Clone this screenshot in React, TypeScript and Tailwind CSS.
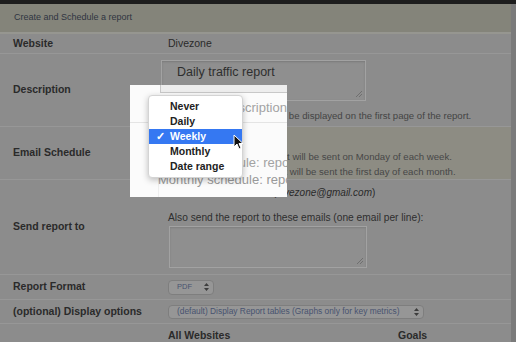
import React from "react";

function Grip() {
  return (
    <svg width="8" height="8" viewBox="0 0 8 8" className="absolute right-[2px] bottom-[2px]">
      <path d="M7 1 L1 7 M7 4 L4 7" stroke="#6f6f6f" strokeWidth="1" />
    </svg>
  );
}

function Arrows() {
  return (
    <svg width="5" height="8" viewBox="0 0 5 8">
      <path d="M2.5 0 L5 3 L0 3 Z M2.5 8 L5 5 L0 5 Z" fill="#3d3d3d" />
    </svg>
  );
}

function Cursor() {
  return (
    <svg width="11" height="16" viewBox="0 0 11 16" className="absolute left-[233px] top-[134px]">
      <path d="M1 1 L1 13 L4 10 L6 15 L8 14 L6 9.5 L10 9.5 Z" fill="#111" stroke="#fff" strokeWidth="1" strokeLinejoin="round" />
    </svg>
  );
}

const items = ["Never", "Daily", "Weekly", "Monthly", "Date range"];

export default function App() {
  return (
    <div className="relative w-[516px] h-[342px] overflow-hidden bg-[#7b7b7b] font-['Liberation_Sans',Arial,sans-serif] text-[#2a2a2a]">
      <div className="h-[4px] bg-[#1d1d1d]" />
      <div className="w-[511px] bg-[#8c8c8c] h-[338px]">
        {/* header */}
        <div className="h-[28px] bg-[#84847a] flex items-center pl-[14px] text-[9px] text-[#2f3441]">
          Create and Schedule a report
        </div>
        <div className="h-[2px] bg-[#969690]" />

        {/* Website */}
        <div className="grid grid-cols-[160px_1fr] h-[20px] border-b border-[#979797]">
          <div className="flex items-center pl-[13px] text-[10.5px] font-bold">Website</div>
          <div className="flex items-center pl-[8px] text-[10.5px]">Divezone</div>
        </div>

        {/* Description */}
        <div className="grid grid-cols-[160px_1fr] h-[73px] border-b border-[#979797]">
          <div className="flex items-center pl-[13px] text-[10.5px] font-bold">Description</div>
          <div className="pt-[6px]">
            <div className="relative ml-[1px] w-[205px] h-[41px] border border-[#a2a2a2] bg-[#8f8f8f] shadow-[inset_0_1px_2px_rgba(0,0,0,0.15)] pl-[15px] pt-[2px] text-[12.5px] text-[#2e2e2e]">
              Daily traffic report
              <Grip />
            </div>
            <div className="mt-[9px] pl-[43px] text-[9.6px] leading-[12px] text-[#444]">
              This description will be displayed on the first page of the report.
            </div>
          </div>
        </div>

        {/* Email Schedule */}
        <div className="grid grid-cols-[160px_1fr] h-[53px] border-b border-[#979797]">
          <div className="flex items-center pl-[13px] text-[10.5px] font-bold">Email Schedule</div>
          <div className="bg-[#8d8c83] pt-[22px] pl-[22px] text-[9.6px] leading-[15px] text-[#474747]">
            <div className="pl-[5px]">Weekly schedule: report will be sent on Monday of each week.</div>
            <div>Monthly schedule: report will be sent the first day of each month.</div>
          </div>
        </div>

        {/* Send report to */}
        <div className="grid grid-cols-[160px_1fr] h-[95px] border-b border-[#979797]">
          <div className="flex items-center pl-[13px] text-[10.5px] font-bold">Send report to</div>
          <div className="pt-[6px] pl-[8px]">
            <div className="flex items-center h-[12px] pl-[37px] text-[10px]">
              <span className="w-[10px] h-[10px] border border-[#777] rounded-[2px] mr-[4px]" />
              Send to me (<span className="italic">divezone@gmail.com</span>)
            </div>
            <div className="mt-[14px] h-[12px] leading-[12px] text-[10.2px] text-[#2e2e2e]">
              Also send the report to these emails (one email per line):
            </div>
            <div className="relative mt-[2px] ml-[1px] w-[198px] h-[42px] border border-[#a2a2a2] bg-[#8f8f8f] shadow-[inset_0_1px_2px_rgba(0,0,0,0.12)]">
              <Grip />
            </div>
          </div>
        </div>

        {/* Report Format */}
        <div className="grid grid-cols-[160px_1fr] h-[25px] border-b border-[#979797]">
          <div className="flex items-center pl-[13px] text-[10.5px] font-bold">Report Format</div>
          <div className="flex items-center pl-[8px]">
            <div className="flex items-center justify-between w-[46px] h-[15px] rounded-[4px] border border-[#7e7e7e] bg-[#969696] pl-[8px] pr-[4px] text-[7.5px] text-[#485370]">
              PDF
              <Arrows />
            </div>
          </div>
        </div>

        {/* Display options */}
        <div className="grid grid-cols-[160px_1fr] h-[24px] border-b border-[#979797]">
          <div className="flex items-center pl-[13px] text-[10.5px] font-bold">(optional) Display options</div>
          <div className="flex items-center pl-[8px]">
            <div className="flex items-center justify-between w-[256px] h-[14px] rounded-[4px] border border-[#7e7e7e] bg-[#969696] pl-[8px] pr-[4px] text-[8.4px] text-[#485370]">
              (default) Display Report tables (Graphs only for key metrics)
              <Arrows />
            </div>
          </div>
        </div>

        {/* All Websites */}
        <div className="grid grid-cols-[160px_1fr]">
          <div />
          <div className="grid grid-cols-[230px_auto] pl-[8px] pt-[5px] text-[10.5px] font-bold leading-[12px]">
            <span>All Websites</span>
            <span>Goals</span>
          </div>
        </div>
      </div>

      {/* spotlight (magnified area) */}
      <div className="absolute left-[130px] top-[85px] w-[157px] h-[112px] bg-[#fbfbfb] overflow-hidden z-10">
        <div className="absolute left-[30px] top-0 w-[130px] h-[8px] bg-[#ededed] border-l border-b border-[#c8c8c8]" />
        <div className="absolute left-0 top-[37px] w-full h-px bg-[#e4e4e4]" />
        <div className="absolute left-[28px] top-[37px] bottom-0 w-px bg-[#eeeeee]" />
        <div className="absolute left-[94px] top-[15px] whitespace-nowrap text-[13px] leading-[16px] text-[#a3a3a3]">
          description
        </div>
        <div className="absolute left-[28px] top-[70px] whitespace-nowrap text-[13px] leading-[16px] text-[#a3a3a3]">
          Weekly schedule: report
        </div>
        <div className="absolute left-[28px] top-[87px] whitespace-nowrap text-[13px] leading-[16px] text-[#999]">
          Monthly schedule: report
        </div>
      </div>

      {/* dropdown menu */}
      <div className="absolute z-20 left-[148px] top-[95px] w-[95px] h-[83px] bg-white rounded-[4px] border border-[#d4d4d4] shadow-[0_2px_6px_rgba(0,0,0,0.25)] pt-[3px]">
        {items.map((it) =>
          it === "Weekly" ? (
            <div key={it} className="relative flex items-center h-[15px] pl-[21px] bg-[#3578f2] text-white text-[10.5px] font-bold">
              <span className="absolute left-[7px] text-[11px]">✓</span>
              {it}
            </div>
          ) : (
            <div key={it} className="flex items-center h-[15px] pl-[21px] text-[#222] text-[10.5px] font-bold">
              {it}
            </div>
          )
        )}
      </div>
      <div className="absolute z-30 left-0 top-0">
        <Cursor />
      </div>
    </div>
  );
}
